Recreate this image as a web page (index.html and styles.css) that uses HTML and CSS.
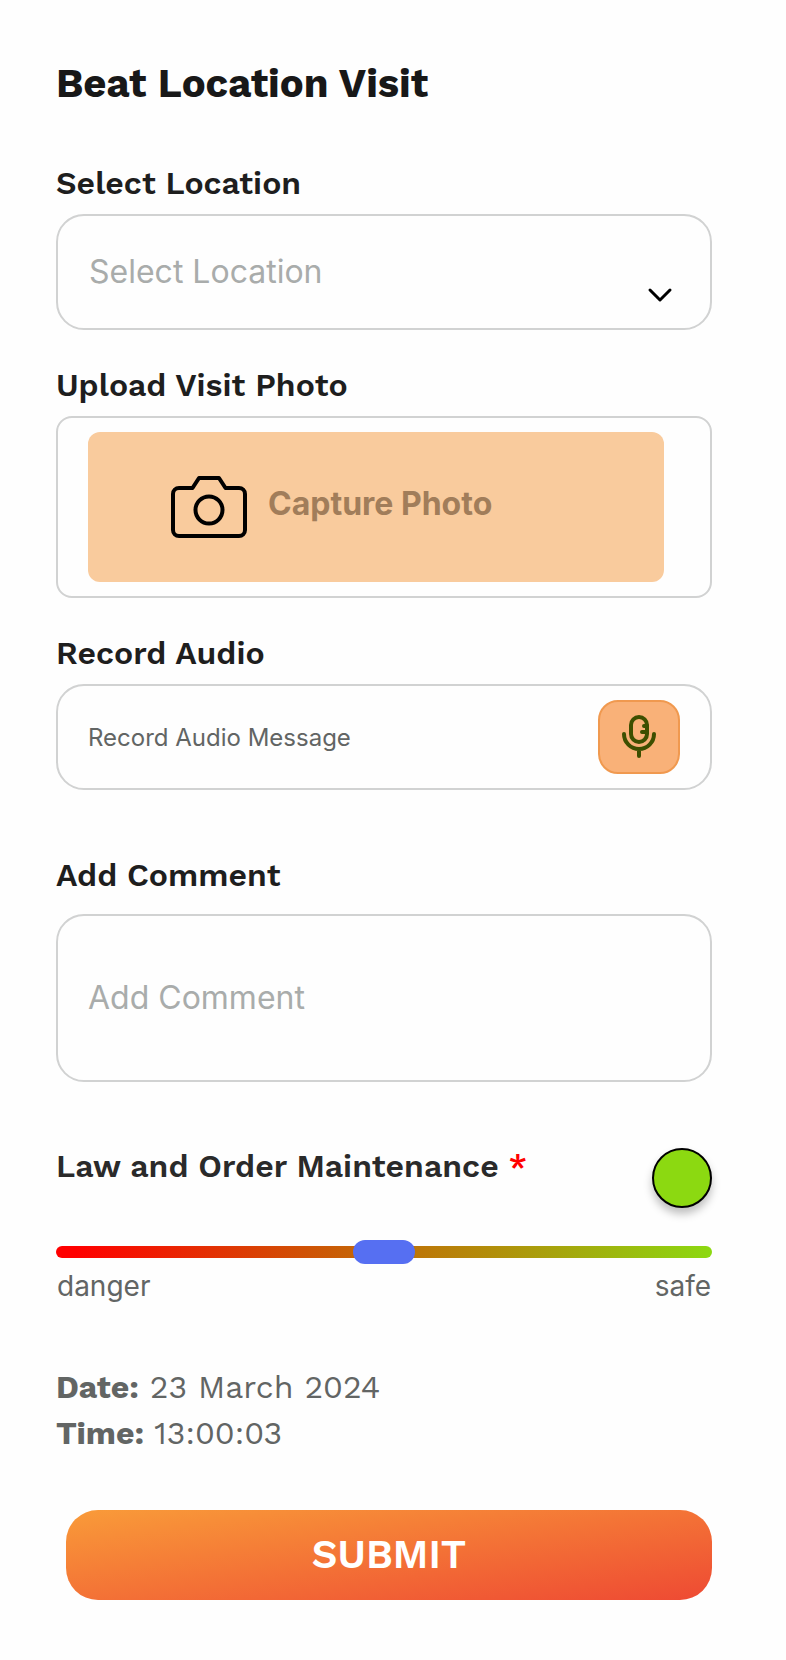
FILE: index.html
```html
<!DOCTYPE html>
<html lang="en">
<head>
  <meta charset="utf-8">
  <meta name="viewport" content="width=device-width, initial-scale=1">
  <title>Beat Location Visit</title>
  <link rel="stylesheet" href="styles.css">
</head>
<body>
  <form class="visit-form">
    <h1>Beat Location Visit</h1>

    <div class="field">
      <label for="location">Select Location</label>
      <div class="select-wrap">
        <select class="box" id="location">
          <option>Select Location</option>
        </select>
        <svg class="chevron" width="26" height="16" viewBox="0 0 26 16" fill="none" stroke="#000" stroke-width="3" stroke-linecap="round" stroke-linejoin="round" aria-hidden="true">
          <path d="M3 3L13 13L23 3"/>
        </svg>
      </div>
    </div>

    <div class="field">
      <label for="capture">Upload Visit Photo</label>
      <div class="box photo-box">
        <button type="button" class="capture" id="capture">
          <svg width="76" height="64" viewBox="0 0 76 64" fill="none" stroke="#000" stroke-width="4" stroke-linejoin="round" aria-hidden="true">
            <path d="M8 13H21.500L28 3H48L54.500 13H68A6 6 0 0 1 74 19V55A6 6 0 0 1 68 61H8A6 6 0 0 1 2 55V19A6 6 0 0 1 8 13Z"/>
            <circle cx="38" cy="35" r="13.500"/>
          </svg>
          <span>Capture Photo</span>
        </button>
      </div>
    </div>

    <div class="field">
      <label for="audio">Record Audio</label>
      <div class="box audio-box">
        <input type="text" id="audio" placeholder="Record Audio Message" readonly>
        <button type="button" class="mic" aria-label="Record">
          <svg width="36" height="44" viewBox="0 0 36 44" fill="none" stroke="#3d4f00" stroke-width="4" stroke-linecap="round" stroke-linejoin="round" aria-hidden="true">
            <rect x="10" y="3" width="16" height="25" rx="8"/>
            <path d="M23 12H26M21 18H26M3 20A15 15 0 0 0 33 20M18 35V42"/>
          </svg>
        </button>
      </div>
    </div>

    <div class="field comment">
      <label for="comment">Add Comment</label>
      <textarea class="box" id="comment" placeholder="Add Comment"></textarea>
    </div>

    <div class="rating">
      <div class="rating-head">
        <label for="rating">Law and Order Maintenance <span class="required">*</span></label>
        <span class="status"></span>
      </div>
      <input type="range" id="rating" min="0" max="100" value="50">
      <div class="scale">
        <span>danger</span>
        <span>safe</span>
      </div>
    </div>

    <div class="stamp">
      <div><b>Date:</b> 23 March 2024</div>
      <div><b>Time:</b> 13:00:03</div>
    </div>

    <button type="submit" class="submit">SUBMIT</button>
  </form>
</body>
</html>
```

FILE: styles.css
```css
* {
  box-sizing: border-box;
}

body {
  margin: 0;
  background-color: #fefefe;
  color: #1e1e1e;
  font-family: "Work Sans", Inter, sans-serif;
}

button, input, select, textarea {
  font-family: Inter, sans-serif;
}

.visit-form {
  display: flex;
  flex-direction: column;
  padding: 62px 74px 60px 56px;
}

h1 {
  margin: 0 0 59px;
  font-size: 40px;
  line-height: 44px;
  font-weight: 700;
  color: #181818;
}

label {
  font-size: 32px;
  line-height: 36px;
  font-weight: 600;
}

.field {
  display: flex;
  flex-direction: column;
  gap: 13px;
  margin-bottom: 37px;
}

.box {
  width: 100%;
  border: 2px solid #d1d2d2;
  border-radius: 28px;
  background-color: #fefefe;
}

/* select with its own arrow laid in the same grid cell */
.select-wrap {
  display: grid;
}

.select-wrap select,
.chevron {
  grid-area: 1 / 1;
}

select {
  height: 116px;
  padding: 0 80px 2px 31px;
  appearance: none;
  font-size: 32px;
  color: #a9acab;
}

.chevron {
  align-self: end;
  justify-self: end;
  margin: 0 39px 27px 0;
  pointer-events: none;
}

.photo-box {
  padding: 14px 46px 14px 30px;
  border-radius: 16px;
}

.capture {
  display: flex;
  align-items: center;
  gap: 21px;
  width: 100%;
  height: 150px;
  padding: 0 83px;
  border: none;
  border-radius: 12px;
  background-color: #f9cb9d;
  color: #a17d5a;
  font-size: 32px;
  font-weight: 700;
  cursor: pointer;
}

.capture span {
  padding-bottom: 8px;
}

.audio-box {
  display: flex;
  align-items: center;
  height: 106px;
  padding: 0 30px;
}

.audio-box input {
  flex: 1;
  min-width: 0;
  padding: 0;
  border: none;
  outline: none;
  background: none;
  font-size: 24px;
}

.audio-box input::placeholder {
  color: #626564;
}

.mic {
  display: flex;
  align-items: center;
  justify-content: center;
  width: 82px;
  height: 74px;
  padding: 0 0 2px;
  border: 2px solid #f0994f;
  border-radius: 20px;
  background-color: #f9b178;
  cursor: pointer;
}

.comment {
  gap: 21px;
  margin-top: 30px;
  margin-bottom: 66px;
}

textarea {
  display: block;
  height: 168px;
  padding: 62px 30px 0;
  resize: none;
  font-size: 32px;
  line-height: 40px;
}

textarea::placeholder {
  color: #a9acab;
}

.rating-head {
  display: flex;
  justify-content: space-between;
  margin-bottom: 32px;
  color: #2a2a2a;
}

.required {
  color: #ff0000;
}

.status {
  flex: none;
  width: 60px;
  height: 60px;
  border: 2px solid #000;
  border-radius: 50%;
  background-color: #8cd911;
  box-shadow: 0 6px 8px rgba(0, 0, 0, 0.25);
}

input[type="range"] {
  display: block;
  width: 100%;
  height: 24px;
  margin: 0;
  appearance: none;
  background: none;
}

input[type="range"]::-webkit-slider-runnable-track {
  height: 12px;
  border-radius: 6px;
  background: linear-gradient(to right, #ff0000 3%, #c66206 45%, #b18f0a 67%, #8cd911);
}

input[type="range"]::-webkit-slider-thumb {
  width: 62px;
  height: 24px;
  margin-top: -6px;
  appearance: none;
  border-radius: 12px;
  background-color: #566ff2;
}

.scale {
  display: flex;
  justify-content: space-between;
  margin-top: 5px;
  padding: 0 1px;
  font-family: Inter, sans-serif;
  font-size: 28px;
  line-height: 34px;
  color: #626564;
}

.stamp {
  margin: 61px 0 54px;
  font-size: 32px;
  line-height: 46px;
  color: #626564;
}

.submit {
  height: 90px;
  margin-left: 10px;
  padding: 0 0 2px;
  border: none;
  border-radius: 32px;
  background: linear-gradient(to bottom right, #f99b39, #ee4a33);
  color: #fff;
  font-family: "Work Sans", Inter, sans-serif;
  font-size: 40px;
  font-weight: 600;
  cursor: pointer;
}
```
